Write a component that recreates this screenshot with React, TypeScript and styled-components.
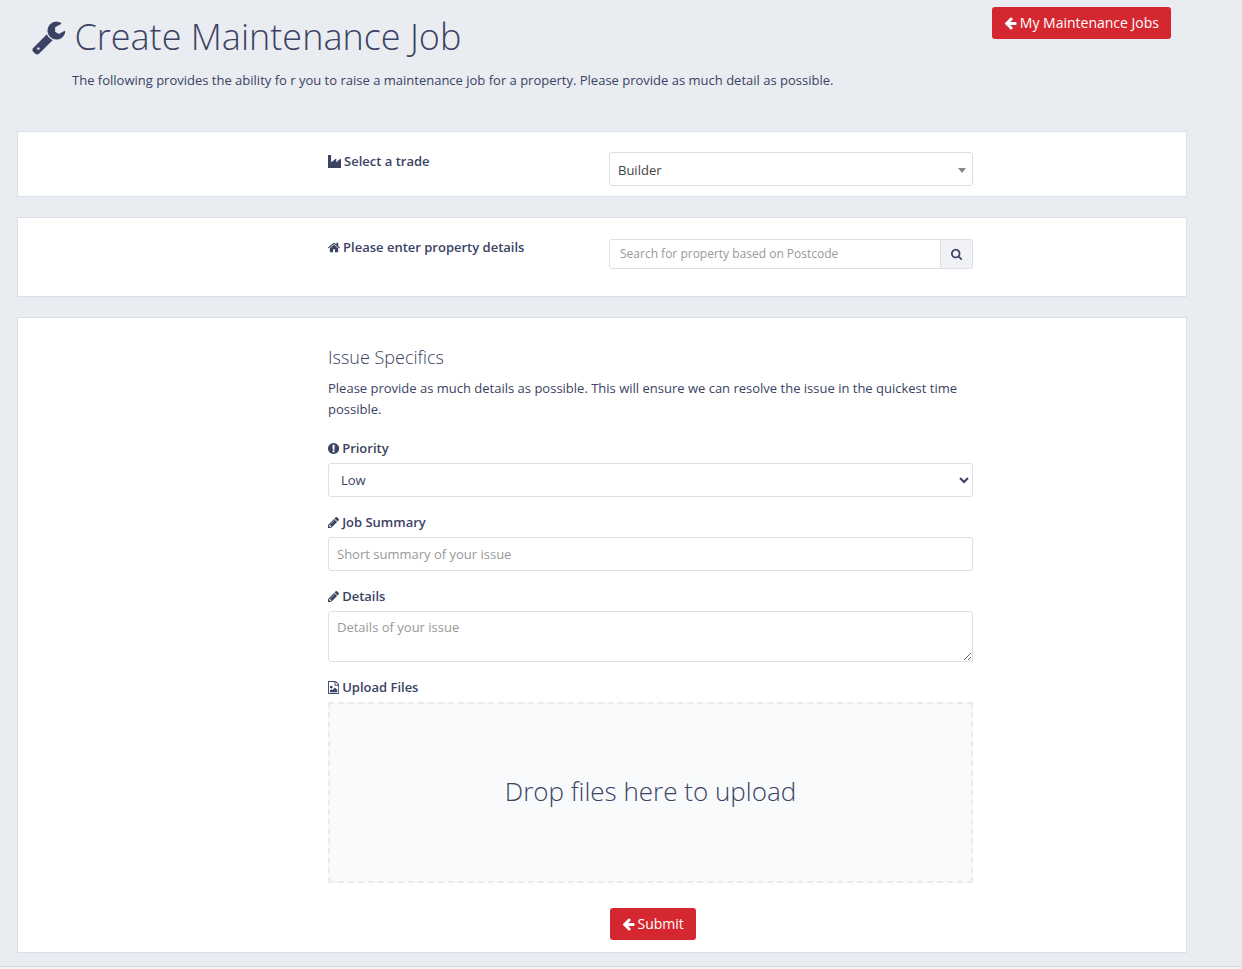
import React from "react";
import styled, { createGlobalStyle } from "styled-components";

const ink = "#3a4363";
const line = "#dae0e8";
const canvas = "#e9ecf1";
const red = "#d5272f";

const GlobalStyle = createGlobalStyle`
  *, *::before, *::after { box-sizing: border-box; }
  body {
    margin: 0;
    background: ${canvas};
    color: ${ink};
    font: 13px/21px "Open Sans", sans-serif;
  }
  input, select, textarea, button { font: inherit; color: inherit; }
  ::placeholder { color: #999; opacity: 1; }
`;

const icons = {
  wrench: {
    box: "64 0 1664 1792",
    d: "M448 1472q0-26-19-45t-45-19-45 19-19 45 19 45 45 19 45-19 19-45zm644-420l-682 682q-37 37-90 37-52 0-91-37l-106-108q-38-36-38-90 0-53 38-91l681-681q39 98 114.500 173.500t173.500 114.500zm634-435q0 39-23 106-47 134-164.500 217.500t-258.500 83.500q-185 0-316.500-131.500t-131.500-316.500 131.500-316.500 316.500-131.500q58 0 121.500 16.500t107.500 46.500q16 11 16 28t-16 28l-293 169v224l193 107q5-3 79-48.500t135.500-81 70.500-35.500q15 0 23.500 10t8.500 25z",
  },
  arrow: {
    box: "64 0 1600 1792",
    d: "M1664 896v128q0 53-32.500 90.500t-84.500 37.500h-704l293 294q38 36 38 90t-38 90l-75 76q-37 37-90 37-52 0-91-37l-651-652q-37-37-37-90 0-52 37-91l651-650q38-38 91-38 52 0 90 38l75 74q38 38 38 91t-38 91l-293 293h704q52 0 84.500 37.500t32.500 90.500z",
  },
  industry: {
    box: "0 0 1792 1792",
    d: "M40 0h350q40 0 40 40v960l640-480q60-30 70 30v450l562-480q80-40 90 30v1202q0 40-40 40H40q-40 0-40-40V40q0-40 40-40z",
  },
  home: {
    box: "64 0 1664 1792",
    d: "M1472 992v480q0 26-19 45t-45 19h-384v-384h-256v384h-384q-26 0-45-19t-19-45v-480q0-1 .5-3t.5-3l575-474 575 474q1 2 1 6zm223-69l-62 74q-8 9-21 11h-3q-13 0-21-7l-692-577-692 577q-12 8-24 7-13-2-21-11l-62-74q-8-10-7-23.500t11-21.500l719-599q32-26 76-26t76 26l244 204v-195q0-14 9-23t23-9h192q14 0 23 9t9 23v408l219 182q10 8 11 21.500t-7 23.500z",
  },
  alert: {
    box: "128 0 1536 1792",
    d: "M896 128q209 0 385.500 103t279.500 279.500 103 385.500-103 385.500-279.500 279.500-385.500 103-385.500-103-279.500-279.500-103-385.500 103-385.500 279.500-279.500 385.500-103zm128 1247v-190q0-14-9-23.500t-22-9.500h-192q-13 0-23 10t-10 23v190q0 13 10 23t23 10h192q13 0 22-9.500t9-23.500zm-2-344l18-621q0-12-10-18-10-8-24-8h-220q-14 0-24 8-10 6-10 18l17 621q0 10 10 17.500t24 7.500h185q14 0 23.500-7.500t10.500-17.500z",
  },
  pencil: {
    box: "128 0 1536 1792",
    d: "M491 1536l91-91-235-235-91 91v107h128v128h107zm523-928q0-22-22-22-10 0-17 7l-542 542q-7 7-7 17 0 22 22 22 10 0 17-7l542-542q7-7 7-17zm-54-192l416 416-832 832h-416v-416zm683 96q0 53-37 90l-166 166-416-416 166-165q36-38 90-38 53 0 91 38l235 234q37 39 37 91z",
  },
  image: {
    box: "128 0 1536 1792",
    d: "M1596 380q28 28 48 76t20 88v1152q0 40-28 68t-68 28h-1344q-40 0-68-28t-28-68v-1600q0-40 28-68t68-28h896q40 0 88 20t76 48zm-444-244v376h376q-10-29-22-41l-313-313q-12-12-41-22zm384 1528v-1024h-416q-40 0-68-28t-28-68v-416h-768v1536h1280zm-128-448v320h-1024v-192l192-192 128 128 384-384zm-832-192q-80 0-136-56t-56-136 56-136 136-56 136 56 56 136-56 136-136 56z",
  },
  search: {
    box: "64 0 1664 1792",
    d: "M1216 832q0-185-131.500-316.500t-316.500-131.500-316.500 131.500-131.500 316.500 131.500 316.500 316.500 131.500 316.500-131.500 131.500-316.500zm512 832q0 52-38 90t-90 38q-54 0-90-38l-343-342q-179 124-399 124-143 0-273.500-55.500t-225-150-150-225-55.500-273.500 55.500-273.500 150-225 225-150 273.500-55.500 273.500 55.500 225 150 150 225 55.500 273.500q0 220-124 399l343 343q37 37 37 90z",
  },
};

const Glyph = styled.svg<{ $size: number }>`
  height: ${(p) => p.$size}px;
  width: auto;
  flex: none;
  fill: currentColor;
`;

function Icon({ name, size = 13 }: { name: keyof typeof icons; size?: number }) {
  return (
    <Glyph $size={size} viewBox={icons[name].box} aria-hidden="true">
      <path d={icons[name].d} />
    </Glyph>
  );
}

const Page = styled.div`
  display: flex;
  flex-direction: column;
  min-height: 100vh;
`;

const Main = styled.main`
  width: calc(100% - 34px);
  max-width: 1170px;
  margin: 0 17px 13px;
  display: flex;
  flex-direction: column;
  gap: 20px;
`;

const Header = styled.header`
  display: flex;
  justify-content: space-between;
  align-items: flex-start;
  padding: 7px 16px 0 15px;
  min-height: 111px;
`;

const Title = styled.h1`
  display: flex;
  align-items: center;
  gap: 9px;
  margin: 10px 0 13px;
  font-size: 36px;
  line-height: 40px;
  font-weight: 300;
`;

const Intro = styled.p`
  margin: 0 0 0 40px;
`;

const RedButton = styled.button`
  display: inline-flex;
  align-items: center;
  gap: 3px;
  height: 32px;
  padding: 0 12px;
  border: 0;
  border-radius: 3px;
  background: ${red};
  color: #fff;
  font-size: 14px;
  line-height: 20px;
  white-space: nowrap;
`;

const Card = styled.section<{ $bottom: number }>`
  display: grid;
  grid-template-columns: 310fr 645fr 213fr;
  padding: 20px 0 ${(p) => p.$bottom}px;
  border: 1px solid ${line};
  background: #fff;
  > * { grid-column: 2; }
`;

const Row = styled.div`
  display: grid;
  grid-template-columns: 281fr 364fr;
  align-items: start;
`;

const Label = styled.label`
  display: flex;
  align-items: center;
  gap: 3px;
  line-height: 19px;
  font-weight: 600;
`;

const Caption = styled(Label).attrs({ as: "div" })``;

const control = `
  display: block;
  width: 100%;
  border: 1px solid ${line};
  border-radius: 3px;
  background: #fff;
  outline: 0;
`;

const SelectWrap = styled.div`
  position: relative;
`;

const TradeSelect = styled.select`
  ${control}
  appearance: none;
  height: 34px;
  padding: 2px 24px 0 8px;
  color: #444;
`;

const Caret = styled.svg`
  position: absolute;
  right: 7px;
  top: 16px;
  width: 8px;
  height: 5px;
  fill: #888;
  pointer-events: none;
`;

const SearchGroup = styled.div`
  display: flex;
  height: 30px;
  margin-top: 1px;
  border: 1px solid ${line};
  border-radius: 3px;
  overflow: hidden;
`;

const SearchInput = styled.input`
  flex: 1;
  min-width: 0;
  padding: 0 10px 1px;
  border: 0;
  outline: 0;
  font-size: 12px;
`;

const SearchButton = styled.button`
  display: flex;
  align-items: center;
  justify-content: center;
  width: 32px;
  padding: 0 0 1px;
  border: 0;
  border-left: 1px solid ${line};
  background: #f0f2f6;
`;

const Form = styled.form`
  display: flex;
  flex-direction: column;
`;

const Heading = styled.h2`
  margin: 8px 0 9px;
  font-size: 18px;
  line-height: 23px;
  font-weight: 300;
`;

const Help = styled.p`
  margin: 0 0 19px;
`;

const Field = styled.div`
  display: flex;
  flex-direction: column;
  gap: 5px;
  margin-bottom: 16px;
`;

const Select = styled.select`
  ${control}
  height: 34px;
  padding: 6px 8px;
`;

const TextInput = styled.input`
  ${control}
  height: 34px;
  padding: 6px 8px;
`;

const TextArea = styled.textarea`
  ${control}
  height: 51px;
  padding: 5px 8px;
  resize: vertical;
`;

const DropZone = styled.button`
  width: 100%;
  height: 181px;
  padding: 0 0 4px;
  border: 2px dashed #e9ebef;
  background: #f9fafc;
  font-size: 26px;
  line-height: 36px;
  font-weight: 300;
`;

const Actions = styled.div`
  display: flex;
  padding: 9px 0 0 282px;
`;

const Footer = styled.footer`
  flex: 1;
  min-height: 3px;
  border-top: 1px solid #d5d8dc;
  background: #f3f3f4;
`;

export default function App() {
  return (
    <Page>
      <GlobalStyle />
      <Main>
        <Header>
          <div>
            <Title>
              <Icon name="wrench" size={36} />
              Create Maintenance Job
            </Title>
            <Intro>
              The following provides the ability fo r you to raise a maintenance job for a
              property. Please provide as much detail as possible.
            </Intro>
          </div>
          <RedButton type="button">
            <Icon name="arrow" size={14} />
            My Maintenance Jobs
          </RedButton>
        </Header>

        <Card $bottom={10}>
          <Row>
            <Label htmlFor="trade">
              <Icon name="industry" />
              Select a trade
            </Label>
            <SelectWrap>
              <TradeSelect id="trade">
                <option>Builder</option>
              </TradeSelect>
              <Caret viewBox="0 0 8 5" aria-hidden="true">
                <path d="M0 0h8L4 5z" />
              </Caret>
            </SelectWrap>
          </Row>
        </Card>

        <Card $bottom={27}>
          <Row>
            <Label htmlFor="property">
              <Icon name="home" />
              Please enter property details
            </Label>
            <SearchGroup>
              <SearchInput id="property" placeholder="Search for property based on Postcode" />
              <SearchButton type="button" aria-label="Search">
                <Icon name="search" size={12} />
              </SearchButton>
            </SearchGroup>
          </Row>
        </Card>

        <Card $bottom={12}>
          <Form onSubmit={(e) => e.preventDefault()}>
            <Heading>Issue Specifics</Heading>
            <Help>
              Please provide as much details as possible. This will ensure we can resolve the
              issue in the quickest time possible.
            </Help>
            <Field>
              <Label htmlFor="priority">
                <Icon name="alert" />
                Priority
              </Label>
              <Select id="priority">
                <option>Low</option>
              </Select>
            </Field>
            <Field>
              <Label htmlFor="summary">
                <Icon name="pencil" />
                Job Summary
              </Label>
              <TextInput id="summary" placeholder="Short summary of your issue" />
            </Field>
            <Field>
              <Label htmlFor="details">
                <Icon name="pencil" />
                Details
              </Label>
              <TextArea id="details" placeholder="Details of your issue" />
            </Field>
            <Field>
              <Caption>
                <Icon name="image" />
                Upload Files
              </Caption>
              <DropZone type="button">Drop files here to upload</DropZone>
            </Field>
            <Actions>
              <RedButton type="submit">
                <Icon name="arrow" size={14} />
                Submit
              </RedButton>
            </Actions>
          </Form>
        </Card>
      </Main>
      <Footer />
    </Page>
  );
}
